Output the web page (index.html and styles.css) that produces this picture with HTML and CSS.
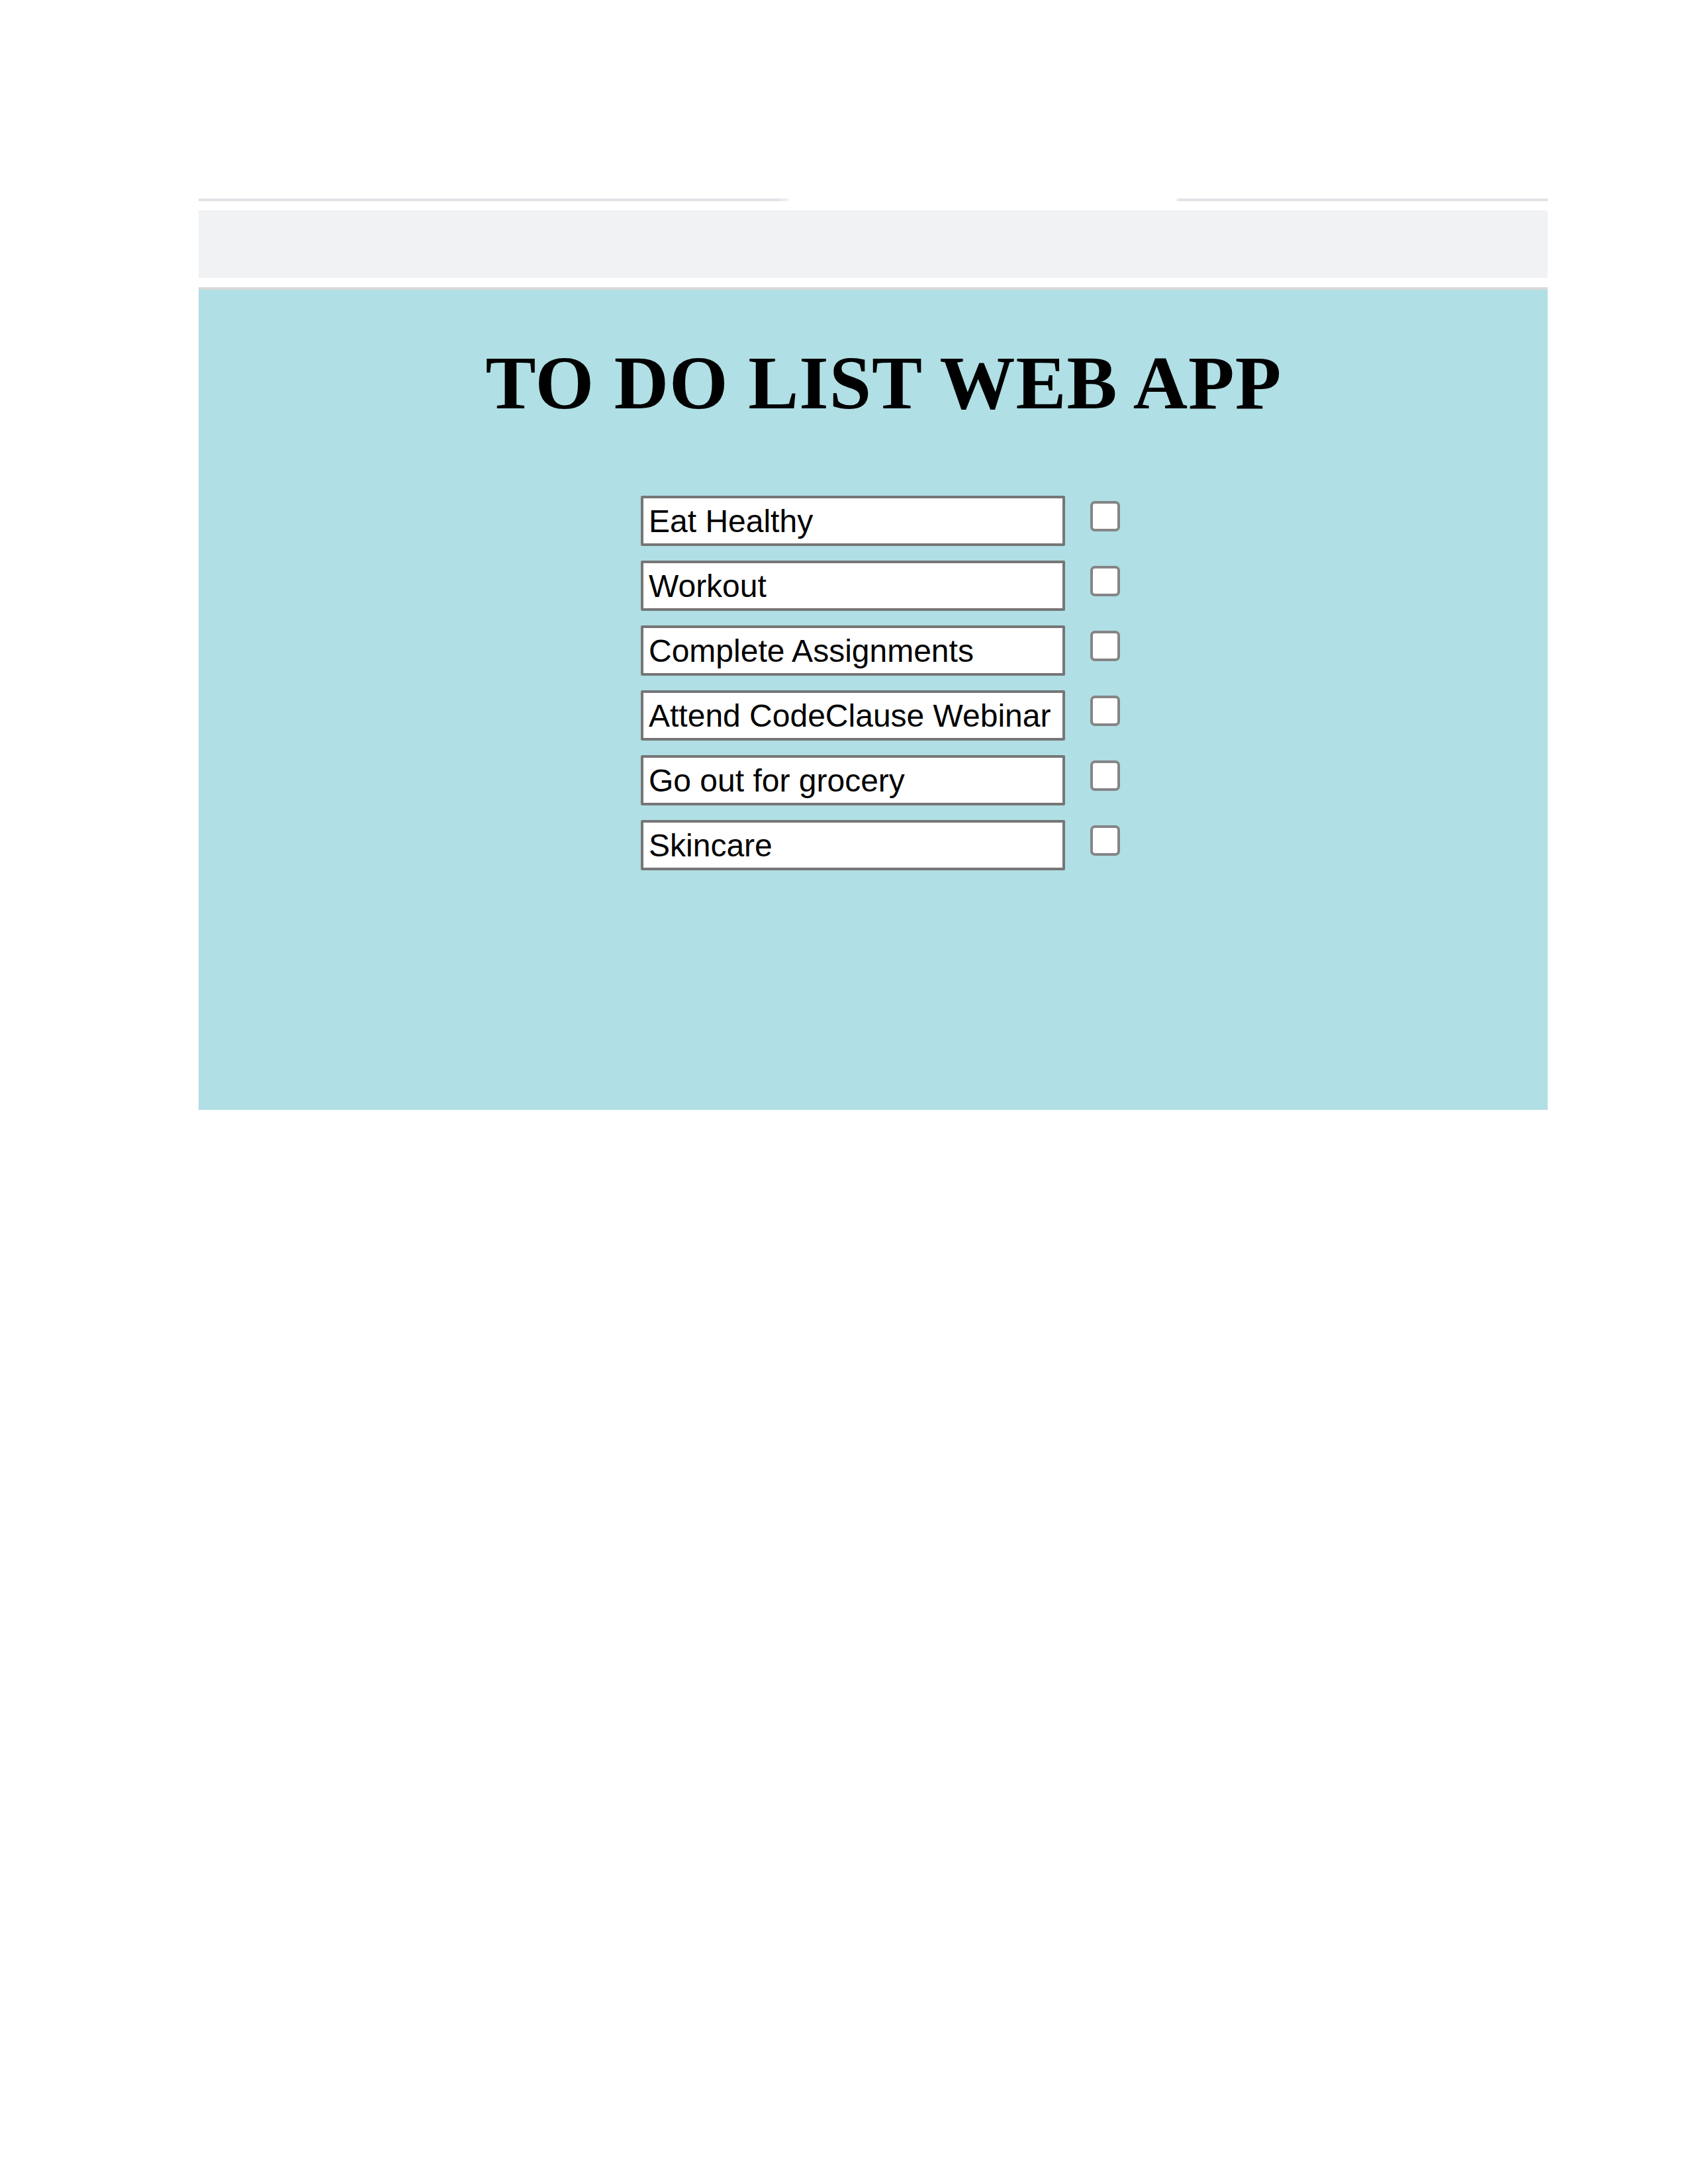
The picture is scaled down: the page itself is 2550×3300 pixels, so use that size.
FILE: index.html
```html
<!DOCTYPE html>
<html lang="en">
<head>
<meta charset="utf-8">
<title>To Do List Web App</title>
<link rel="stylesheet" href="styles.css">
</head>
<body>
<div class="page">
  <div class="topline">
    <span class="seg seg-left"></span>
    <span class="seg seg-right"></span>
  </div>
  <div class="band"></div>
  <main class="app">
    <h1 class="title">TO DO LIST WEB APP</h1>
    <ul class="tasks">
      <li class="task"><input class="task-text" type="text" value="Eat Healthy"><input class="task-check" type="checkbox"></li>
      <li class="task"><input class="task-text" type="text" value="Workout"><input class="task-check" type="checkbox"></li>
      <li class="task"><input class="task-text" type="text" value="Complete Assignments"><input class="task-check" type="checkbox"></li>
      <li class="task"><input class="task-text" type="text" value="Attend CodeClause Webinar"><input class="task-check" type="checkbox"></li>
      <li class="task"><input class="task-text" type="text" value="Go out for grocery"><input class="task-check" type="checkbox"></li>
      <li class="task"><input class="task-text" type="text" value="Skincare"><input class="task-check" type="checkbox"></li>
    </ul>
  </main>
</div>
</body>
</html>
```

FILE: styles.css
```css
html, body {
  margin: 0;
  padding: 0;
  background: #ffffff;
}

.page {
  width: 2038px;
  padding: 300px 0 0 300px;
}

.topline {
  display: flex;
  height: 4px;
}

.seg {
  display: block;
  height: 4px;
  background: #dfe2e6;
}

.seg-left {
  width: 892px;
  background: linear-gradient(to right, #dfe2e6 0, #dfe2e6 98%, #f4f5f7 100%);
}

.seg-right {
  width: 561px;
  margin-left: auto;
  background: linear-gradient(to right, #f0f1f3 0, #dfe2e6 1%, #dfe2e6 100%);
}

.band {
  margin-top: 14px;
  height: 102px;
  background: #f1f2f4;
}

.app {
  margin-top: 14px;
  height: 1243px;
  box-sizing: border-box;
  border-top: 4px solid #d8d9d9;
  background: #b0dfe5;
  display: flex;
  flex-direction: column;
  align-items: center;
}

.title {
  margin: 0;
  padding: 84px 0 0 32px;
  font-family: "Liberation Serif", "Times New Roman", serif;
  font-weight: bold;
  font-size: 114px;
  line-height: 114px;
  letter-spacing: 1px;
  color: #000;
  white-space: nowrap;
}

.tasks {
  list-style: none;
  margin: 113px 0 0 0;
  padding: 0 0 0 22px;
  display: flex;
  flex-direction: column;
  gap: 22px;
}

.task {
  display: flex;
  align-items: flex-start;
}

.task-text {
  box-sizing: border-box;
  width: 641px;
  height: 76px;
  margin: 0;
  padding: 0 8px;
  border: 4px solid #767676;
  border-radius: 2px;
  background: #ffffff;
  font-family: "Liberation Sans", Arial, sans-serif;
  font-size: 48px;
  color: #000;
  outline: none;
}

.task-check {
  -webkit-appearance: none;
  appearance: none;
  box-sizing: border-box;
  width: 45px;
  height: 46px;
  margin: 8px 0 0 38px;
  border: 4px solid #858585;
  border-radius: 7px;
  background: #ffffff;
}
```
